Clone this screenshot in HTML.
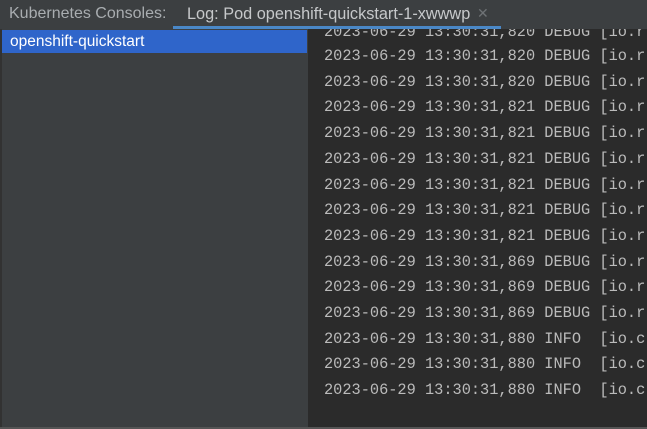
<!DOCTYPE html>
<html><head><style>
body{margin:0;width:647px;height:429px;overflow:hidden;background:#2b2b2b;font-family:"Liberation Sans",sans-serif;position:relative}
.tb{position:absolute;left:0;top:0;width:647px;height:29px;background:#3c3f41;}
.tb .k{position:absolute;left:9px;top:5px;font-size:16px;color:#a9adb0}
.tb .t{position:absolute;left:187px;top:5px;font-size:16.3px;color:#c6c8ca}
.tb .x{position:absolute;left:477px;top:5px;font-size:14px;color:#6e7275}
.tb .u{position:absolute;left:173px;top:26px;width:328px;height:3px;background:#4a88c7}
.lp{position:absolute;left:0;top:29px;width:308px;height:400px;background:#3c3f41;border-left:2px solid #323232;box-sizing:border-box}
.sel{position:absolute;left:2px;top:30px;width:305px;height:23px;background:#2f65ca;color:#fff;font-size:15.5px;line-height:23px;padding-left:8px;box-sizing:border-box}
.log{position:absolute;left:324px;top:0;font-family:"Liberation Mono",monospace;font-size:15.3px;color:#bbbbbb;white-space:pre}
.log div{position:absolute;left:0;height:26px;line-height:26px}
.bl{position:absolute;left:0;top:427px;width:647px;height:2px;background:#555}
</style></head><body>
<div class="lp"></div>
<div class="sel">openshift-quickstart</div>
<div class="log">
<div style="top:19px">2023-06-29 13:30:31,820 DEBUG [io.r</div>
<div style="top:43px">2023-06-29 13:30:31,820 DEBUG [io.r</div>
<div style="top:68.7px">2023-06-29 13:30:31,820 DEBUG [io.r</div>
<div style="top:94.4px">2023-06-29 13:30:31,821 DEBUG [io.r</div>
<div style="top:120.1px">2023-06-29 13:30:31,821 DEBUG [io.r</div>
<div style="top:145.8px">2023-06-29 13:30:31,821 DEBUG [io.r</div>
<div style="top:171.5px">2023-06-29 13:30:31,821 DEBUG [io.r</div>
<div style="top:197.2px">2023-06-29 13:30:31,821 DEBUG [io.r</div>
<div style="top:222.9px">2023-06-29 13:30:31,821 DEBUG [io.r</div>
<div style="top:248.6px">2023-06-29 13:30:31,869 DEBUG [io.r</div>
<div style="top:274.3px">2023-06-29 13:30:31,869 DEBUG [io.r</div>
<div style="top:300px">2023-06-29 13:30:31,869 DEBUG [io.r</div>
<div style="top:325.7px">2023-06-29 13:30:31,880 INFO  [io.c</div>
<div style="top:351.4px">2023-06-29 13:30:31,880 INFO  [io.c</div>
<div style="top:377.1px">2023-06-29 13:30:31,880 INFO  [io.c</div>
</div>
<div class="tb"><span class="k">Kubernetes Consoles:</span><span class="t">Log: Pod openshift-quickstart-1-xwwwp</span><span class="x">✕</span><div class="u"></div></div>
<div class="bl"></div>
</body></html>
